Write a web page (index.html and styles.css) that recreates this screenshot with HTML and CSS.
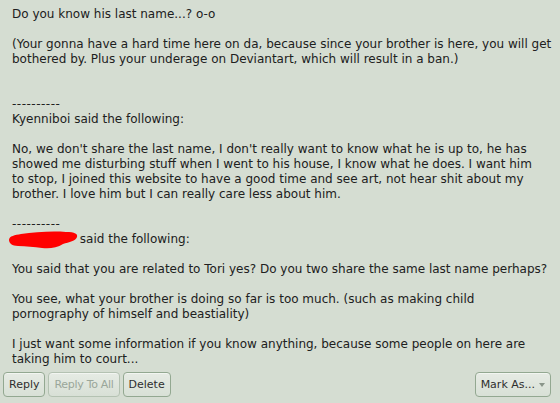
FILE: index.html
```html
<!DOCTYPE html>
<html>
<head>
<meta charset="utf-8">
<link rel="stylesheet" href="styles.css">
</head>
<body>
<div class="page">
  <div class="message">Do you know his last name...? o-o<br><br>(Your gonna have a hard time here on da, because since your brother is here, you will get<br>bothered by. Plus your underage on Deviantart, which will result in a ban.)<br><br><br><span class="dash">----------</span><br>Kyenniboi said the following:<br><br>No, we don't share the last name, I don't really want to know what he is up to, he has<br>showed me disturbing stuff when I went to his house, I know what he does. I want him<br>to stop, I joined this website to have a good time and see art, not hear shit about my<br>brother. I love him but I can really care less about him.<br><br><span class="dash">----------</span><br><span class="redact"><svg class="scribble" width="72" height="18" viewBox="0 0 72 18"><path d="M1 9 C1 5 7 4 13 3 C27 1 44 0 58 1 C67 1 70 3 69 6 C68 10 61 11 55 13 C49 17 41 18 34 17 C26 16 18 15 10 15 C4 15 1 12 1 9 Z" fill="#ff0000"/></svg></span> said the following:<br><br>You said that you are related to Tori yes? Do you two share the same last name perhaps?<br><br>You see, what your brother is doing so far is too much. (such as making child<br>pornography of himself and beastiality)<br><br>I just want some information if you know anything, because some people on here are<br>taking him to court...</div>
  <div class="actions">
    <div class="group">
      <button class="btn">Reply</button>
      <button class="btn disabled">Reply To All</button>
      <button class="btn">Delete</button>
    </div>
    <button class="btn mark">Mark As... <span class="caret"></span></button>
  </div>
</div>
</body>
</html>
```
FILE: styles.css
```css
html, body {
  margin: 0;
  padding: 0;
  background: #d5ddd2;
}
.page {
  width: 560px;
  height: 403px;
  overflow: hidden;
  font-family: "DejaVu Sans", Verdana, sans-serif;
  font-size: 12px;
  color: #202020;
}
.message {
  padding: 7px 0 0 12px;
  line-height: 15px;
  white-space: nowrap;
}
.dash {
  letter-spacing: 0.5px;
}
.redact {
  display: inline-block;
  width: 68px;
  height: 15px;
  position: relative;
  vertical-align: top;
  margin-left: -4px;
}
.scribble {
  position: absolute;
  left: 0;
  top: -1px;
}
.actions {
  display: flex;
  justify-content: space-between;
  padding: 5px 9px 0 3px;
}
.group {
  display: flex;
  gap: 3px;
}
.btn {
  font-family: "DejaVu Sans", Verdana, sans-serif;
  font-size: 11px;
  color: #2e2e2e;
  height: 25px;
  padding: 0 5px;
  border: 1px solid #93a891;
  border-radius: 4px;
  background: linear-gradient(#e6ebe4, #d8e0d6);
  box-shadow: inset 0 1px 0 #f2f5f1;
}
.btn.disabled {
  color: #9aa69a;
  border-color: #b4c2b2;
  letter-spacing: -0.3px;
}
.mark {
  display: flex;
  align-items: center;
  gap: 4px;
}
.caret {
  width: 0;
  height: 0;
  border-left: 3px solid transparent;
  border-right: 3px solid transparent;
  border-top: 4px solid #8a958a;
}
```
